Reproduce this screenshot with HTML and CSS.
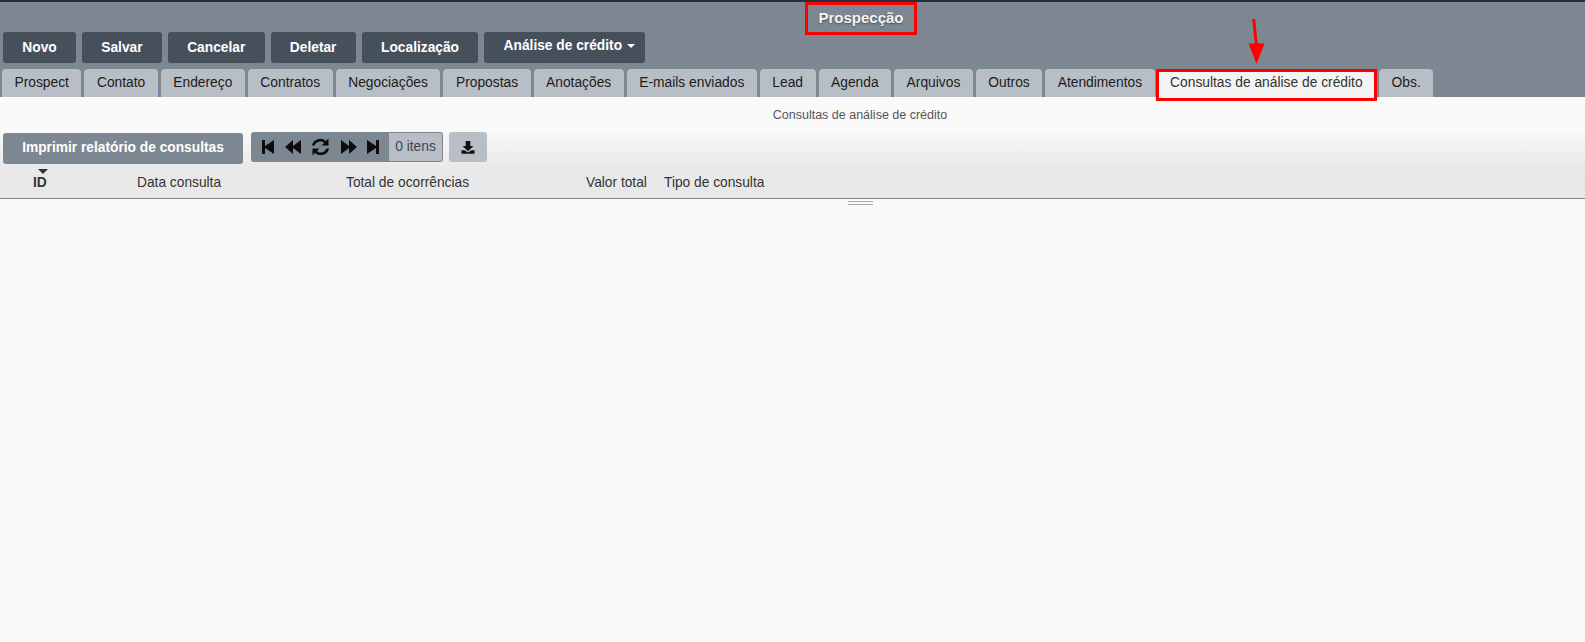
FILE: index.html
```html
<!DOCTYPE html>
<html lang="pt-BR">
<head>
<meta charset="utf-8">
<title>Prospecção</title>
<link rel="stylesheet" href="styles.css">
</head>
<body>
<header class="header">
  <div class="title-row"><h1 class="title">Prospecção</h1></div>
  <div class="actions">
    <button class="btn">Novo</button>
    <button class="btn">Salvar</button>
    <button class="btn">Cancelar</button>
    <button class="btn">Deletar</button>
    <button class="btn">Localização</button>
    <button class="btn btn-menu">Análise de crédito <span class="caret"></span></button>
  </div>
  <nav class="tabs">
    <a class="tab">Prospect</a>
    <a class="tab">Contato</a>
    <a class="tab">Endereço</a>
    <a class="tab">Contratos</a>
    <a class="tab">Negociações</a>
    <a class="tab">Propostas</a>
    <a class="tab">Anotações</a>
    <a class="tab">E-mails enviados</a>
    <a class="tab">Lead</a>
    <a class="tab">Agenda</a>
    <a class="tab">Arquivos</a>
    <a class="tab">Outros</a>
    <a class="tab">Atendimentos</a>
    <a class="tab tab-active">Consultas de análise de crédito</a>
    <a class="tab">Obs.</a>
  </nav>
</header>
<svg class="arrow" width="24" height="46" viewBox="0 0 24 46"><path d="M8.200 0h3L13.600 24.500H20.500L12.500 45 4.500 24.500H10.800z" fill="#f00"/></svg>
<main class="panel">
  <div class="gradient">
    <div class="caption">Consultas de análise de crédito</div>
    <div class="toolbar">
      <button class="print">Imprimir relatório de consultas</button>
      <div class="pager">
        <div class="pager-nav">
          <svg class="ico" width="12" height="14" viewBox="0 0 12 14"><path d="M0 0h3v6L12 0v14L3 8v6H0z"/></svg>
          <svg class="ico" width="16" height="14" viewBox="0 0 16 14"><path d="M8 0v6l8-6v14L8 8v6L0 7z"/></svg>
          <svg class="ico" width="19" height="18" viewBox="0 0 19 18"><path d="M17.500 .5v7h-7l2.600-2.600A5.800 5.800 0 0 0 3.700 7.500H.9A8.500 8.500 0 0 1 15 3zM1.500 17.500v-7h7L5.900 13.100A5.800 5.800 0 0 0 15.300 10.500h2.800A8.500 8.500 0 0 1 4 15z"/></svg>
          <svg class="ico" width="16" height="14" viewBox="0 0 16 14"><path d="M8 0v6L0 0v14l8-6v6l8-7z"/></svg>
          <svg class="ico" width="12" height="14" viewBox="0 0 12 14"><path d="M12 0H9v6L0 0v14l9-6v6h3z"/></svg>
        </div>
        <span class="count">0 itens</span>
      </div>
      <button class="export"><svg width="14" height="13" viewBox="0 0 15 14"><path d="M5 0h5v5.500h3.300L7.500 11 1.700 5.500H5zM.5 10h3.200l3.800 2.500L11.300 10h3.200v3.800H.5z" fill="#111"/></svg></button>
    </div>
    <div class="columns">
      <span class="col col-id"><span class="sort"></span>ID</span>
      <span class="col">Data consulta</span>
      <span class="col">Total de ocorrências</span>
      <span class="col">Valor total</span>
      <span class="col">Tipo de consulta</span>
    </div>
  </div>
  <div class="grip"><span class="grip-bars"></span></div>
</main>
</body>
</html>
```
FILE: styles.css
```css
* { box-sizing: border-box; }
html, body { margin: 0; height: 100%; }
body {
  background: #fafafa;
  font-family: "Liberation Sans", Arial, sans-serif;
  font-size: 13.750px;
  color: #222;
  overflow: hidden;
  position: relative;
}
button { font-family: inherit; cursor: pointer; }

.header {
  background: #7d8791;
  border-top: 2px solid #232f3a;
  height: 97px;
  padding: 0 0 0 2px;
}
.title-row { height: 30px; padding-left: 135px; display: flex; justify-content: center; }
.title {
  margin: 0;
  height: 33px;
  padding: 0 10px;
  border: 3px solid #f00;
  font-size: 15px;
  font-weight: bold;
  line-height: 26px;
  color: #f4f4f4;
  text-shadow: 0 1px 2px rgba(0,0,0,.45);
}
.actions { display: flex; gap: 6px; padding-left: 1px; height: 31px; }
.btn {
  height: 31px;
  padding: 0 19.300px;
  border: 0;
  border-radius: 3px;
  background: #46505b;
  color: #fff;
  font-size: 13.750px;
  font-weight: bold;
}
.btn-menu { padding: 0 10px 4px 19.300px; }
.caret {
  display: inline-block;
  vertical-align: 2px;
  margin-left: 1px;
  border: 4.500px solid transparent;
  border-top: 4.500px solid #fff;
  border-bottom: 0;
}
.tabs { display: flex; gap: 3px; margin-top: 6px; }
.tab {
  display: block;
  height: 28px;
  padding: 0 12.500px;
  line-height: 27px;
  background: #b8bec6;
  border-radius: 4px 4px 0 0;
  color: #1c1c1c;
  font-size: 13.800px;
  white-space: nowrap;
}
.tab-active {
  background: #f4f4f4;
  height: 32px;
  margin: 0 -1px -4px -2px;
  padding: 0 11.500px;
  border: 3px solid #f00;
  border-radius: 0;
  line-height: 21px;
  color: #333;
  position: relative;
}
.arrow { position: absolute; left: 1244px; top: 19px; }

.gradient {
  height: 102px;
  background: linear-gradient(#fafafa 30px, #e8e8e8 74px);
  border-bottom: 1px solid #7d8791;
}
.caption { text-align: center; padding: 11px 0 0 135px; height: 35px; font-size: 12.500px; color: #555; }
.toolbar { display: flex; align-items: flex-start; gap: 8px; padding-left: 3px; height: 32px; }
.print {
  height: 31px;
  width: 240px;
  margin-top: 1px;
  padding: 0 0 3px;
  border: 0;
  border-radius: 3px;
  background: #7d8791;
  color: #fff;
  font-size: 13.750px;
  font-weight: bold;
}
.pager { display: flex; height: 30px; width: 192px; }
.pager-nav {
  display: flex;
  align-items: center;
  gap: 10.500px;
  padding-left: 11px;
  width: 138px;
  background: #7d8791;
  border-radius: 3px 0 0 3px;
}
.ico { fill: #0d0d0d; display: block; }
.count {
  flex: 1;
  background: #b8bec6;
  border: 1px solid #7d8791;
  border-left: 0;
  border-radius: 0 3px 3px 0;
  text-align: center;
  line-height: 27px;
  font-size: 13.800px;
  color: #3f4650;
}
.export {
  width: 38px;
  height: 30px;
  margin-left: -2px;
  border: 0;
  border-radius: 3px;
  background: #b8bec6;
  display: flex;
  align-items: center;
  justify-content: center;
  padding: 0;
}
.columns {
  display: grid;
  grid-template-columns: 137px 209px 240px 78px 1fr;
  height: 32px;
  align-items: center;
  padding-top: 4px;
  color: #333;
}
.col-id { position: relative; font-weight: bold; padding-left: 33px; }
.sort {
  position: absolute;
  left: 38px;
  top: -6px;
  border: 5px solid transparent;
  border-top: 5px solid #333;
  border-bottom: 0;
}
.grip { display: flex; justify-content: center; padding: 2px 0 0 135px; }
.grip-bars {
  display: block;
  width: 25px;
  height: 4px;
  border-top: 1px solid #a8a8a8;
  border-bottom: 1px solid #a8a8a8;
}
```
